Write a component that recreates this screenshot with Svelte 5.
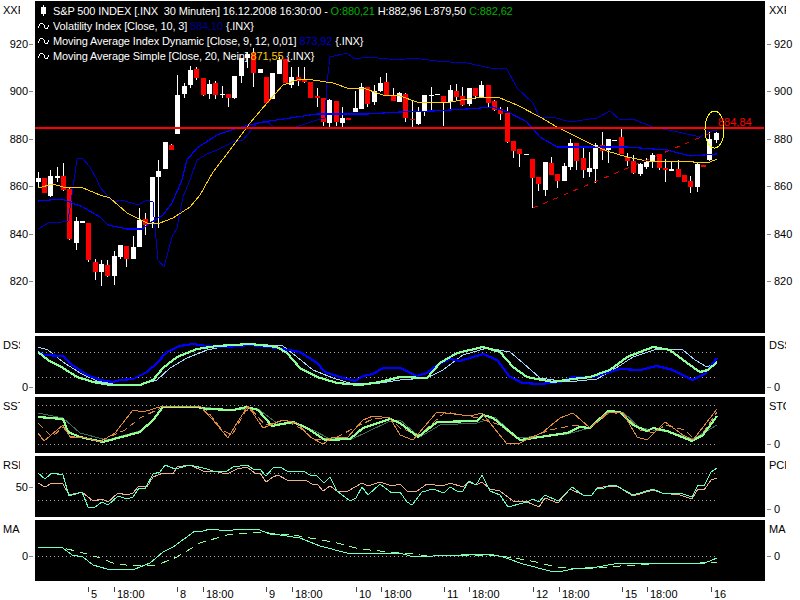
<script>
	// wick top, wick bottom, body top, body bottom, colour (page pixels)
	const candles = [
		[172,187,178,182,'w'],[178,193,178,193,'r'],[170,197,176,196,'w'],[167,182,176,178,'w'],[163,191,176,190,'r'],
		[187,240,189,239,'r'],[217,250,221,243,'w'],[221,223,221,223,'w'],[223,262,223,260,'r'],[259,280,262,272,'r'],
		[260,286,264,272,'w'],[260,277,265,276,'r'],[251,285,256,276,'w'],[245,259,245,257,'w'],[246,267,246,259,'r'],
		[236,259,247,259,'w'],[208,247,220,247,'w'],[213,235,219,225,'r'],[177,228,177,224,'w'],[160,228,171,177,'w'],
		[142,169,142,169,'w'],[144,150,145,150,'r'],[75,134,95,134,'w'],[83,98,86,94,'w'],[66,88,70,85,'w'],
		[67,80,69,78,'r'],[78,96,78,95,'r'],[80,99,84,94,'w'],[81,99,83,95,'r'],[86,98,94,95,'w'],
		[94,107,94,98,'r'],[76,99,76,98,'w'],[58,83,58,76,'w'],[52,68,54,58,'w'],[48,87,53,73,'r'],
		[69,73,69,73,'w'],[77,104,77,103,'r'],[73,99,73,99,'w'],[57,74,60,74,'w'],[59,83,59,83,'r'],
		[67,88,77,85,'w'],[67,86,77,81,'r'],[67,83,79,82,'r'],[82,98,82,98,'r'],[88,107,96,98,'r'],
		[98,126,98,122,'r'],[99,127,100,123,'w'],[101,126,101,122,'r'],[107,127,118,123,'w'],[118,120,118,120,'r'],
		[91,112,108,112,'w'],[83,109,87,109,'w'],[87,107,87,104,'r'],[85,105,91,102,'w'],[77,92,83,91,'w'],
		[73,95,82,95,'r'],[88,101,95,101,'r'],[92,102,93,102,'w'],[93,122,94,118,'r'],[100,127,119,120,'r'],
		[107,125,112,124,'w'],[95,116,95,111,'w'],[87,111,95,96,'w'],[94,95,94,95,'w'],[96,126,96,102,'r'],
		[85,110,90,102,'w'],[84,100,91,97,'r'],[87,106,96,105,'r'],[88,106,88,104,'w'],[88,99,88,96,'r'],
		[81,97,85,97,'w'],[85,107,85,103,'r'],[100,111,101,110,'r'],[107,120,109,114,'r'],[107,143,113,142,'r'],
		[141,158,141,151,'r'],[149,167,149,154,'r'],[154,155,154,155,'w'],[159,208,159,178,'r'],[177,191,177,184,'r'],
		[162,196,162,190,'w'],[157,175,163,175,'r'],[174,188,174,181,'r'],[163,181,166,181,'w'],[139,170,143,167,'w'],
		[143,170,143,161,'r'],[148,178,158,170,'r'],[152,177,168,172,'w'],[143,183,145,169,'w'],[132,160,145,151,'r'],
		[139,163,139,150,'w'],[140,141,140,141,'w'],[129,154,137,154,'r'],[153,166,157,161,'r'],[155,174,161,173,'r'],
		[163,176,164,174,'w'],[158,169,162,167,'w'],[153,168,155,162,'w'],[154,170,154,168,'r'],[159,182,168,170,'r'],
		[162,171,169,171,'w'],[160,177,169,177,'r'],[175,182,175,182,'r'],[176,193,181,187,'r'],[163,192,164,187,'w'],
		[165,167,165,167,'r'],[131,161,139,160,'w'],[132,143,133,140,'w']
	]
	const candleX = (i) => Math.floor(38.3 + 6.335 * i)

	const bandLine = '38,229 50,222 57,223 68,221 72,195 77,159 82,158 90,167 97,180 100,187 113,202 122,200 138,205 147,200 153,202 154,217 158,260 164,267 172,237 177,228 183,197 190,180 197,160 207,154 217,150 233,142 243,140 257,123 267,122 277,129 293,128 317,120 325,118 327,83 330,57 347,53 355,59 367,57 400,60 413,58 437,61 450,62 467,63 490,68 507,69 517,88 533,103 540,118 553,117 570,122 597,118 610,111 620,120 633,119 653,127 683,133 700,137 707,132 717,130'
	const dynamicLine = '38,201 62,199 72,203 83,207 100,217 108,225 127,229 142,229 150,223 163,215 172,203 182,180 187,160 197,148 217,135 237,128 263,122 290,118 317,114 367,114 400,112 433,111 467,109 493,107 510,113 527,122 540,137 557,147 627,147 640,148 667,150 690,156 717,154'
	const simpleLine = '38,188 53,184 63,187 83,188 100,195 110,198 127,213 147,223 160,223 173,218 190,207 200,195 213,172 230,150 250,123 267,103 283,85 300,79 313,80 333,83 347,88 363,88 383,95 400,96 417,102 433,103 450,102 467,99 483,97 500,98 517,105 540,117 557,127 573,135 593,145 607,151 627,157 647,161 687,161 700,163 710,162 717,159'

	const panels = [
		{
			name: 'DSS', rightName: 'DSS', top: 336, height: 58,
			dots: [352, 377],
			leftTicks: [[387, '0']], rightTicks: [[387, '0']],
			lines: [
				{ points: '38,347 48,350 63,362 80,373 97,381 113,384 143,384 157,380 170,368 187,358 207,350 227,346 253,344 283,346 297,357 313,370 333,378 353,384 380,383 400,380 427,378 443,370 463,355 487,348 510,352 523,363 540,378 567,382 597,379 613,370 633,357 657,349 683,350 695,360 707,367 717,362', color: '#a0d8ff', width: 1 },
				{ points: '38,352 45,355 63,356 72,365 87,375 100,380 113,382 120,380 133,379 147,372 157,363 167,352 180,346 193,344 207,346 227,347 250,345 277,348 300,352 317,363 325,372 340,377 355,381 363,376 373,374 383,368 400,368 417,376 427,373 437,365 450,359 460,361 483,354 497,360 510,377 523,383 540,384 560,382 573,377 593,377 610,372 620,369 640,370 657,366 673,370 692,380 705,374 717,358', color: '#0000ff', width: 2.2 },
				{ points: '38,352 48,360 63,368 77,377 93,382 110,385 140,385 153,380 163,368 177,357 197,349 217,346 250,344 277,347 287,353 300,368 317,377 337,383 360,385 380,382 400,377 427,378 440,363 457,353 483,347 500,352 513,367 527,377 553,382 573,379 590,377 610,370 627,357 653,347 670,350 687,363 700,372 708,370 717,362', color: '#88ff98', width: 2.2 }
			]
		},
		{
			name: 'SST', rightName: 'STO', top: 397, height: 56,
			dots: [405, 444],
			leftTicks: [], rightTicks: [[444, '0']],
			lines: [
				{ points: '38,413 63,418 80,433 107,440 143,430 163,408 200,407 233,410 257,408 277,423 293,423 313,430 328,438 350,440 388,422 400,420 420,437 440,425 477,423 495,417 517,438 567,434 590,428 610,412 623,412 640,428 653,430 670,432 693,439 717,425', color: '#3f6a58', width: 1 },
				{ points: '38,423 52,437 63,427 70,436 100,441 125,430 140,418 163,407 205,408 222,430 232,435 245,412 250,408 265,425 285,420 300,428 315,440 335,438 360,425 375,418 392,420 400,428 420,435 445,412 478,418 500,425 520,441 550,430 575,425 590,428 610,412 625,415 640,430 655,433 665,425 685,430 695,440 705,430 717,412', color: '#d88a3c', width: 1, dash: '7 4' },
				{ points: '38,417 63,419 68,432 80,437 103,442 140,432 153,420 163,407 197,407 207,409 233,410 247,407 258,410 272,426 293,422 307,428 325,440 350,439 363,428 390,419 400,423 418,437 437,422 477,421 483,415 493,418 520,440 567,433 580,427 590,428 608,411 620,412 633,425 647,431 653,428 667,431 692,441 703,435 717,416', color: '#90ff90', width: 2.2 },
				{ points: '38,433 44,441 63,425 70,437 83,437 100,442 115,433 133,410 143,412 163,406 200,406 213,420 228,438 237,423 248,406 263,428 283,420 297,423 310,437 323,444 333,437 347,438 363,420 373,416 390,418 400,435 413,440 437,412 470,416 482,413 507,444 520,443 543,432 560,418 573,413 590,428 608,412 623,413 637,437 647,440 665,422 683,435 693,440 717,409', color: '#e08a3c', width: 1 }
			]
		},
		{
			name: 'RSI', rightName: 'PCR', top: 456, height: 61,
			dots: [473, 500],
			leftTicks: [[487, '50']], rightTicks: [[509, '0']],
			lines: [
				{ points: '38,483 45,487 52,483 63,484 69,495 82,492 93,501 102,499 108,502 118,493 127,495 133,493 139,486 147,487 153,477 163,473 173,474 177,467 190,465 203,471 213,471 227,474 237,469 247,467 255,473 260,473 266,482 273,477 278,475 287,480 307,481 312,484 318,485 323,491 330,486 337,491 348,491 362,483 368,486 380,482 392,486 400,484 407,491 417,491 427,484 443,486 450,483 463,487 469,482 476,485 482,482 490,489 500,491 513,501 527,502 539,507 545,498 558,503 570,489 583,495 592,495 597,488 610,486 617,486 633,496 653,490 662,493 680,495 692,499 698,489 704,490 711,480 717,478', color: '#e6b488', width: 1 },
				{ points: '38,473 45,479 52,473 63,475 69,496 82,492 88,507 95,507 102,502 108,505 118,496 127,499 133,497 139,488 145,489 153,474 160,472 165,465 175,469 190,465 207,469 213,471 227,471 233,467 247,465 253,469 260,469 266,476 273,468 280,467 287,471 305,472 310,475 317,476 324,483 330,477 337,491 350,501 356,498 362,487 368,495 380,484 392,493 400,492 407,502 412,505 422,492 433,489 444,493 450,487 457,491 463,491 469,481 476,485 482,475 490,491 500,495 508,507 527,502 533,499 539,502 545,495 558,501 572,487 583,495 592,495 597,488 602,489 610,485 617,486 633,495 653,489 662,493 683,494 692,497 698,485 704,486 711,472 717,468', color: '#60ffc8', width: 1 }
			]
		},
		{
			name: 'MA', rightName: 'MA', top: 520, height: 61,
			dots: [556],
			leftTicks: [[556, '0']], rightTicks: [[556, '0']],
			lines: [
				{ points: '38,547 63,548 80,552 100,558 113,563 133,566 157,565 177,557 200,543 227,535 257,532 293,535 333,542 360,549 400,553 410,553 420,555 500,556 527,560 557,567 580,569 620,566 667,563 700,563 717,562', color: '#90ff90', width: 1, dash: '8 6' },
				{ points: '38,547 63,548 72,555 83,557 93,565 107,569 135,569 150,563 163,552 173,547 195,531 203,531 210,529 227,531 240,529 257,529 270,534 280,535 300,538 320,546 347,553 400,553 410,556 433,556 490,554 503,557 523,564 550,571 563,571 573,569 597,567 620,563 640,564 657,563 687,564 705,563 717,558', color: '#70ffc4', width: 1 }
			]
		}
	]

	const priceTicks = [[44, '920'], [91, '900'], [139, '880'], [186, '860'], [234, '840'], [281, '820']]
	const timeTicks = [[88, '5'], [114, '18:00'], [177, '8'], [203, '18:00'], [266, '9'], [292, '18:00'], [356, '10'], [381, '18:00'], [444, '11'], [469, '18:00'], [533, '12'], [559, '18:00'], [622, '15'], [647, '18:00'], [711, '16']]
</script>

{#snippet axis(side, name, ticks, top)}
	<div class="axis {side}">
		<div class="axis-name">{name}</div>
		{#each ticks as [y, label]}
			<div class="axis-tick" style="top: {y - top}px">
				<span>{label}</span><i></i>
			</div>
		{/each}
	</div>
{/snippet}

{#snippet sine()}
	<svg class="sine" viewBox="0 0 12 8" width="12" height="8">
		<path d="M0 6 L2 2 L4 1 L6 3 L7 6 L9 7 L11 3" fill="none" stroke="#fff" />
	</svg>
{/snippet}

<div class="screen">
	<section class="row" style="height: 332px">
		{@render axis('left', 'XXF', priceTicks, 1)}
		<div class="plot">
			<svg viewBox="35 1 730 332" width="730" height="332">
				{#each candles as [wt, wb, bt, bb, c], i}
					<rect x={candleX(i)} y={wt} width="1" height={wb - wt} fill="#fff" />
					<rect x={candleX(i) - 2} y={bt} width="5" height={Math.max(bb - bt, 1)} fill={c === 'w' ? '#fff' : '#f00'} />
				{/each}
				<polyline points={bandLine} fill="none" stroke="#0000c0" />
				<polyline points={dynamicLine} fill="none" stroke="#0000ff" stroke-width="1.2" />
				<polyline points={simpleLine} fill="none" stroke="#ffd000" />
				<line x1="533" y1="208" x2="713" y2="132" stroke="#e00000" stroke-dasharray="5 6" />
				<rect x="35" y="127" width="729" height="2" fill="#f00" />
				<ellipse cx="714.5" cy="129.5" rx="9.5" ry="18.5" fill="none" stroke="#ffff00" />
			</svg>
			<div class="legend">
				<div class="legend-line first">
					<svg class="candle-mark" viewBox="0 0 7 11" width="7" height="11"><rect x="3" y="0" width="1" height="11" fill="#fff" /><rect x="1" y="2" width="5" height="7" fill="#fff" /></svg>
					<span>S&amp;P 500 INDEX [.INX&nbsp; 30 Minuten] 16.12.2008 16:30:00 - <b class="green">O:880,21</b> H:882,96 L:879,50 <b class="green">C:882,62</b></span>
				</div>
				<div class="legend-line">{@render sine()}<span>Volatility Index [Close, 10, 3] <b class="navy">884,10</b> {'{'}.INX{'}'}</span></div>
				<div class="legend-line">{@render sine()}<span>Moving Average Index Dynamic [Close, 9, 12, 0,01] <b class="blue">873,92</b> {'{'}.INX{'}'}</span></div>
				<div class="legend-line">{@render sine()}<span>Moving Average Simple [Close, 20, Nein] <b class="gold">871,55</b> {'{'}.INX{'}'}</span></div>
			</div>
			<span class="level">884,84</span>
		</div>
		{@render axis('right', 'XXF', priceTicks, 1)}
	</section>

	{#each panels as p}
		<section class="row" style="height: {p.height}px">
			{@render axis('left', p.name, p.leftTicks, p.top)}
			<div class="plot">
				<svg viewBox="35 {p.top} 730 {p.height}" width="730" height={p.height}>
					{#each p.dots as y}
						<line x1="38" y1={y + 0.5} x2="716" y2={y + 0.5} stroke="#a8a8a8" stroke-dasharray="1 3" />
					{/each}
					{#each p.lines as l}
						<polyline points={l.points} fill="none" stroke={l.color} stroke-width={l.width} stroke-dasharray={l.dash} />
					{/each}
				</svg>
			</div>
			{@render axis('right', p.rightName, p.rightTicks, p.top)}
		</section>
	{/each}

	<div class="times">
		{#each timeTicks as [x, label]}
			<div class="time" style="left: {x}px"><i></i><span>{label}</span></div>
		{/each}
	</div>
</div>

<style>
	:global(body) {
		margin: 0;
		background: #fff;
	}
	.screen {
		width: 800px;
		height: 600px;
		padding-top: 1px;
		box-sizing: border-box;
		display: flex;
		flex-direction: column;
		gap: 3px;
		font-family: "Liberation Sans", Arial, sans-serif;
		font-size: 11px;
		letter-spacing: -0.13px;
		color: #000;
		overflow: hidden;
	}
	.row {
		display: flex;
		flex: none;
	}
	.plot {
		position: relative;
		width: 730px;
		background: #000;
		flex: none;
	}
	.plot svg {
		display: block;
		shape-rendering: crispEdges;
	}
	.axis {
		position: relative;
		flex: none;
		width: 35px;
	}
	.axis-name {
		position: absolute;
		top: 2px;
		left: 3px;
		width: 17px;
		overflow: hidden;
		white-space: nowrap;
		line-height: 14px;
		letter-spacing: 0;
	}
	.axis.right .axis-name {
		left: 4px;
	}
	.axis-tick {
		position: absolute;
		display: flex;
		align-items: center;
		gap: 1px;
		line-height: 12px;
		transform: translateY(-50%);
		letter-spacing: 0;
	}
	.axis-tick i {
		width: 4px;
		height: 1px;
		background: #888;
	}
	.axis.left .axis-tick {
		right: 2px;
	}
	.axis.right .axis-tick {
		left: 2px;
		flex-direction: row-reverse;
		gap: 3px;
	}
	.legend {
		position: absolute;
		top: 2px;
		left: 3px;
		color: #fff;
		display: flex;
		flex-direction: column;
		white-space: nowrap;
	}
	.legend-line {
		display: flex;
		align-items: center;
		height: 15px;
		gap: 3px;
	}
	.legend-line.first {
		gap: 6px;
		margin-left: 2px;
	}
	.legend b {
		font-weight: normal;
	}
	.sine {
		flex: none;
	}
	.candle-mark {
		flex: none;
	}
	.green { color: #00b000; }
	.navy { color: #000090; }
	.blue { color: #0000c8; }
	.gold { color: #ffc800; }
	.level {
		position: absolute;
		left: 683px;
		top: 114px;
		color: #f00;
		line-height: 14px;
		letter-spacing: 0;
	}
	.times {
		position: relative;
		height: 16px;
	}
	.time {
		position: absolute;
		top: 0;
		display: flex;
		gap: 2px;
		line-height: 14px;
		white-space: nowrap;
		letter-spacing: 0;
	}
	.time i {
		width: 1px;
		height: 5px;
		background: #444;
		margin-top: 3px;
	}
	.time span {
		padding-top: 3px;
	}
</style>
